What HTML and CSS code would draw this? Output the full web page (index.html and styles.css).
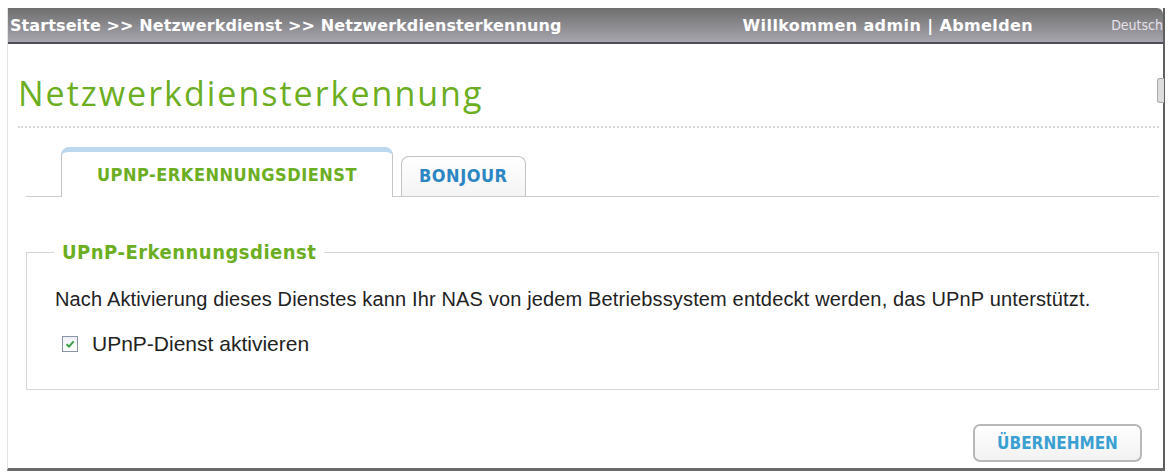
FILE: index.html
```html
<!DOCTYPE html>
<html lang="de">
<head>
    <meta charset="UTF-8">
    <title>Netzwerkdiensterkennung</title>
    <link rel="stylesheet" href="styles.css">
</head>
<body>
    <div class="frame">
        <div class="topbar">
            <div class="crumbs">Startseite &gt;&gt; Netzwerkdienst &gt;&gt; Netzwerkdiensterkennung</div>
            <div class="user">Willkommen admin | Abmelden</div>
            <div class="lang">Deutsch</div>
        </div>

        <div class="page">
            <div class="scroll-thumb"></div>
            <h1 class="page-title">Netzwerkdiensterkennung</h1>

            <div class="tabs">
                <div class="tab active">UPNP-ERKENNUNGSDIENST</div>
                <div class="tab">BONJOUR</div>
            </div>

            <fieldset class="group">
                <legend>UPnP-Erkennungsdienst</legend>
                <p class="group-text">Nach Aktivierung dieses Dienstes kann Ihr NAS von jedem Betriebssystem entdeckt werden, das UPnP unterstützt.</p>
                <label class="check">
                    <span class="box">
                        <svg viewBox="0 0 12 12" width="12" height="12"><path d="M2.5 6.2 L5 8.6 L9.6 3.4" fill="none" stroke="#3aa043" stroke-width="2"/></svg>
                    </span>
                    UPnP-Dienst aktivieren
                </label>
            </fieldset>

            <div class="actions">
                <button class="btn">ÜBERNEHMEN</button>
            </div>
        </div>
    </div>
</body>
</html>
```

FILE: styles.css
```css
:root {
    --green: #6cae22;
    --blue: #2d86c4;
    --text-color: #222;
}

* {
    margin: 0;
    padding: 0;
    box-sizing: border-box;
}

body {
    background: white;
    font-family: "Liberation Sans", Arial, sans-serif;
    color: var(--text-color);
}

.frame {
    margin: 8px 6px 0 7px;
    height: 463px;
    border-left: 1px solid #e2e2e2;
    border-right: 2px solid #5f5f5f;
    border-bottom: 3px solid #6a6a6a;
    display: flex;
    flex-direction: column;
}

.topbar {
    height: 36px;
    background: linear-gradient(#6e6e6e, #8a8a8e 50%, #a7a5ae);
    border-bottom: 2px solid #4e4e58;
    border-top-right-radius: 6px;
    display: flex;
    align-items: center;
    color: white;
    font-family: "DejaVu Sans", sans-serif;
    font-weight: bold;
    font-size: 16px;
    white-space: nowrap;
}

.crumbs {
    padding-left: 2px;
    flex: 1;
    letter-spacing: 0.1px;
}

.user {
    letter-spacing: 0.4px;
}

.lang {
    margin-left: 78px;
    font-family: "DejaVu Sans Condensed", sans-serif;
    font-size: 14px;
    font-weight: normal;
    color: #e6e2ea;
}

.page {
    flex: 1;
    position: relative;
    padding: 0 4px 0 10px;
}

.scroll-thumb {
    position: absolute;
    right: -1px;
    top: 34px;
    width: 7px;
    height: 25px;
    border: 1px solid #aaa;
    border-right: none;
    border-radius: 3px 0 0 3px;
    background: #ddd;
}

.page-title {
    font-family: "Open Sans", sans-serif;
    font-weight: normal;
    font-size: 34px;
    letter-spacing: 2px;
    color: var(--green);
    padding-top: 25px;
    line-height: 48px;
    padding-bottom: 9px;
    border-bottom: 2px dotted #d8d8d8;
}

.tabs {
    margin: 19px 0 0 8px;
    display: flex;
    align-items: flex-end;
    gap: 8px;
    padding-left: 35px;
    border-bottom: 1px solid #ccc;
    height: 50px;
}

.tab {
    font-family: "DejaVu Sans Condensed", sans-serif;
    font-weight: bold;
    font-size: 18px;
    letter-spacing: 0.5px;
    color: var(--blue);
    height: 40px;
    padding: 0 17px;
    line-height: 38px;
    border: 1px solid #c4c4c4;
    border-bottom: none;
    border-radius: 8px 8px 0 0;
    background: linear-gradient(white, #f4f4f4);
}

.tab.active {
    color: var(--green);
    height: 50px;
    width: 332px;
    text-align: center;
    line-height: 46px;
    border-top: 5px solid #bcd8f0;
    background: white;
    margin-bottom: -1px;
}

.group {
    margin: 44px 0 0 8px;
    border: 1px solid #d6d6d6;
    padding: 23px 28px 33px;
}

.group legend {
    font-family: "DejaVu Sans Condensed", sans-serif;
    font-weight: bold;
    font-size: 20px;
    line-height: 23px;
    letter-spacing: 0.5px;
    color: var(--green);
    padding: 0 8px;
    margin-left: -1px;
}

.group-text {
    font-size: 20px;
    line-height: 24px;
    letter-spacing: 0.15px;
}

.check {
    display: flex;
    align-items: center;
    gap: 14px;
    margin-top: 21px;
    margin-left: 7px;
    font-size: 21px;
    line-height: 24px;
}

.box {
    width: 16px;
    height: 16px;
    border: 1px solid #8a94a8;
    background: linear-gradient(#eef0f4, white);
    display: flex;
    align-items: center;
    justify-content: center;
}

.actions {
    display: flex;
    justify-content: flex-end;
    margin-top: 34px;
    padding-right: 17px;
}

.btn {
    width: 169px;
    height: 38px;
    border: 2px solid #b8b8b8;
    border-radius: 7px;
    background: linear-gradient(white, #f2f2f2);
    font-family: "DejaVu Sans Condensed", sans-serif;
    font-weight: bold;
    font-size: 17px;
    color: #3aa0d2;
}
```
